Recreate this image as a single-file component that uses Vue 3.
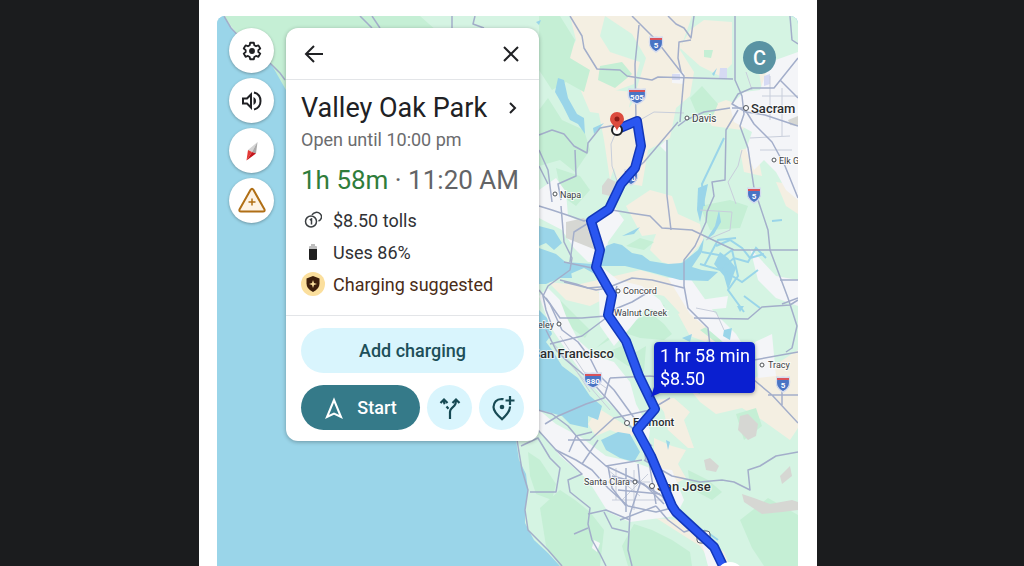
<script setup>
import { ref } from 'vue'

const muted = ref(false)

const greens = [
  'M224 16 H420 L470 60 L400 90 H286 L270 62 L240 38Z',
  'M539 16 H560 L575 40 L570 58 L590 70 L584 92 L566 82 L552 90 L539 70Z',
  'M548 98 L562 120 L584 130 L590 150 L575 172 L560 160 L539 166 V110Z',
  'M600 66 L622 62 L632 74 L615 88 L598 80Z',
  'M704 50 L713 50 L711 58 L704 57Z',
  'M690 98 L702 86 L718 104 L712 118 L696 112Z',
  'M556 168 L580 176 L590 190 L576 206 L562 196Z',
  'M626 246 L640 238 L654 242 L644 250Z',
  'M548 296 L560 300 L572 312 L590 330 L585 338 L566 324Z',
  'M596 348 L612 334 L640 318 L652 314 L664 324 L672 334 L664 340 L640 338 L622 332Z',
  'M607 352 L622 346 L636 352 L646 346 L644 372 L628 366Z',
  'M640 296 L655 298 L665 306 L654 312Z',
  'M700 330 L716 322 L730 336 L718 344Z',
  'M690 352 L700 348 L700 394 L690 390Z',
  'M528 452 L540 460 L556 484 L552 500 L536 494 L530 476Z',
  'M540 508 L560 490 L575 500 L590 512 L604 530 L600 566 H560 L546 546Z',
  'M634 524 L652 530 L672 540 L690 552 L692 566 H628 L622 546Z',
  'M688 470 L708 480 L722 492 L712 500 L690 488Z',
  'M740 520 L768 498 L798 515 V566 H764 L752 548Z',
  'M742 110 L750 104 L756 112 L748 120Z',
  'M700 206 L730 200 L748 206 L740 228 L710 230Z',
  'M736 414 L756 408 L762 426 L744 440Z'
]

const beiges = [
  'M570 16 L605 16 L600 36 L610 52 L640 62 L634 84 L612 92 L604 114 L590 112 L578 84 L566 60 L576 40Z',
  'M605 16 H692 L680 50 L694 72 L690 96 L676 108 L670 138 L648 150 L642 186 L618 182 L608 146 L612 128 L632 104 L646 58 L632 34Z',
  'M594 88 L632 92 L622 144 L610 180 L604 140Z',
  'M690 30 L704 20 L732 22 L732 64 L720 76 L700 66 L680 48Z',
  'M758 66 L780 68 L786 84 L762 90Z',
  'M700 110 L726 100 L760 112 L742 130 L712 126Z',
  'M626 206 L650 190 L672 196 L678 214 L700 224 L704 240 L690 256 L676 266 L662 262 L650 250 L656 234 L642 236Z',
  'M572 286 L640 270 L668 278 L690 296 L706 320 L720 342 L714 346 L690 324 L664 296 L620 286 L584 296Z',
  'M548 282 L588 286 L606 298 L590 306 L566 300Z',
  'M678 314 L690 308 L712 330 L706 342 L690 336Z',
  'M755 378 L798 350 V428 L790 440 L762 420 L742 408 L716 414 L700 402 L692 392Z',
  'M655 400 L674 398 L690 412 L684 420 L694 448 L688 448 L668 430 L664 412Z',
  'M598 408 L614 418 L636 432 L630 438 L610 430 L596 436 L588 424Z',
  'M654 438 L672 446 L686 450 L678 464 L686 478 L668 488 L654 472Z',
  'M656 518 L678 520 L704 536 L724 552 L730 566 H714 L700 546Z',
  'M764 502 L782 506 L778 514 L766 522Z',
  'M740 150 L756 146 L762 176 L744 172Z',
  'M776 182 L790 184 L798 196 V214 L786 206Z',
  'M550 372 L562 384 L576 390 L570 376Z'
]

const urban = [
  'M770 62 L798 52 V200 L786 190 L776 172 L764 160 L754 170 L746 150 L752 132 L734 122 L730 106 L744 92 L760 90Z',
  'M672 74 L684 72 L684 84 L672 83Z',
  'M660 146 L666 140 L666 152Z',
  'M539 190 L556 178 L566 192 L568 216 L582 222 L598 214 L614 206 L624 220 L608 242 L604 262 L588 262 L574 248 L562 230 L539 218Z',
  'M539 296 L548 288 L560 300 L566 316 L578 340 L596 356 L614 362 L630 382 L636 404 L650 430 L648 444 L636 430 L606 400 L584 376 L566 350 L550 326Z',
  'M598 264 L618 280 L642 286 L660 300 L668 314 L646 308 L630 328 L614 346 L600 326Z',
  'M539 410 L556 424 L582 438 L606 456 L634 462 L650 468 L672 470 L684 500 L676 516 L660 518 L630 522 L608 512 L588 480 L560 456 L539 430Z',
  'M668 278 L690 278 L714 312 L736 334 L750 356 L730 348 L690 314Z',
  'M750 248 L776 276 L798 280 V306 L776 298 L758 280Z',
  'M700 300 L728 296 L726 308 L704 310Z',
  'M755 342 L772 334 L776 376 L758 378Z',
  'M594 540 L600 543 L597 552 L592 548Z',
  'M700 536 L712 542 L720 566 H708Z'
]

const grays = [
  'M566 222 L584 218 L592 232 L596 250 L586 246 L566 238Z',
  'M602 186 L608 178 L616 182 L610 196 L602 194Z',
  'M740 416 L748 414 L758 424 L756 436 L748 440 L738 430Z',
  'M704 460 L710 458 L719 466 L716 472 L706 470Z',
  'M780 476 L790 466 L792 476 L782 484Z',
  'M742 494 L754 498 L770 504 L792 500 L798 502 V510 L782 512 L762 514 L744 502Z',
  'M788 120 L798 116 V126 L790 125Z'
]

const water = [
  'M558 78 L564 80 L568 98 L577 114 L584 118 L585 134 L578 124 L570 120 L563 106 L555 92Z',
  'M536 22 L541 20 L539 25Z',
  'M593 128 L604 123 L594 134Z',
  'M712 74 L717 68 L714 76Z',
  'M698 188 L708 184 L704 204 L700 222 L697 210Z',
  'M719 210 L721 222 L714 234 L706 240 L715 226Z',
  'M539 226 L554 230 L562 243 L554 250 L546 243 L539 246Z',
  'M539 248 L556 254 L570 266 L572 278 L560 278 L546 284 L539 284Z',
  'M566 262 L592 264 L604 272 L602 278 L584 268 L570 274Z',
  'M600 266 L606 246 L614 243 L622 245 L632 253 L642 255 L650 261 L668 264 L682 263 L698 250 L704 238 L702 252 L692 267 L702 270 L718 272 L708 281 L680 280 L650 272 L625 266Z',
  'M622 236 L640 227 L634 234Z',
  'M714 264 L720 252 L728 258 L736 268 L728 290 L724 276Z',
  'M539 310 L547 318 L552 334 L546 342 L552 350 L562 366 L578 378 L590 396 L602 406 L598 420 L588 416 L588 428 L570 424 L562 416 L548 412 L539 410Z',
  'M601 440 L618 432 L630 434 L640 452 L634 462 L620 458 L606 450Z',
  'M724 330 L732 328 L730 340 L723 336Z',
  'M737 306 L744 306 L740 312Z',
  'M666 440 L670 442 L668 450Z',
  'M682 338 L692 334 L690 342Z'
]

const channels = 'M704 266 L718 240 L736 238 M702 252 L724 256 L732 250 L738 276 L728 290 L744 312 M716 246 L730 240 L742 248 L750 258 L764 254 M700 264 L720 270 L734 258 L748 262 L756 248 L766 258 M704 206 L702 184 L724 138 M726 272 L742 282 L758 270 M744 296 L760 308 M772 221 L782 220 M704 530 L718 540'

const roads = [
  'M570 16 L582 36 L584 48 L597 69 L620 70 L627 76 L652 80 L658 77 L733 79',
  'M632 16 L656 40 L684 76 L680 122 M678 122 L644 162 L622 182',
  'M639 25 L635 64 L636 120',
  'M668 16 L676 24 L684 28 L691 38 L694 16 M691 40 L679 42 L678 58 L681 72',
  'M735 16 V80 L742 96 L744 114 L740 126 L748 148 L754 188 L768 230 L770 250 L788 298 L797 326 L792 348 L786 352',
  'M790 16 L792 40 L798 44',
  'M798 58 L774 88 L752 88 L738 94 L732 104 L746 112 L765 115 L798 126',
  'M798 98 L780 80 M730 108 L704 112 L686 120 L678 126',
  'M732 108 L744 108 L754 124 L772 142 L785 166 L798 198',
  'M738 110 L726 130 L725 180 L712 182 L714 196 L707 212 L706 222 L695 246 L684 260 L684 286 L688 308 L708 328 L710 346',
  'M667 140 V196 L671 230',
  'M539 135 L552 130 L564 134 L574 146 L587 153 L588 143 L600 128 L616 125',
  'M575 150 L576 176 L558 184 L561 200 M539 150 L548 170 L552 202 M539 166 L548 184',
  'M561 206 L564 242 L572 258 L570 270 L548 286 L543 296 L546 310 L552 326',
  'M539 206 L552 210 L570 216 L584 221 L612 210 L630 213 L650 216 L662 228 L692 230 L734 250 H798',
  'M590 222 L574 232 L570 262 M564 262 L592 268 L608 288 L596 290 L564 282',
  'M560 280 L576 284 L588 288 L600 287 L612 286 L632 278 L652 280 L684 288',
  'M617 286 L608 312 L632 302 L652 290 M546 298 L560 318 L582 318 L606 316 L612 314 M694 318 L748 319 L762 307 L790 305 L798 300',
  'M539 290 L550 304 L562 330 L578 342 L590 358 L598 374 L614 390 L640 426 L646 460',
  'M546 330 L556 350 L566 360 L590 380 L610 402 L630 426 L652 446',
  'M550 344 L582 336 L606 318 M610 378 L650 376 L684 380 L754 360 L798 352',
  'M780 280 H798 M782 304 L798 298',
  'M754 380 L772 395 L798 423 M768 395 H798 M782 378 V405',
  'M538 410 L552 414 L568 426 L588 450 L606 466 L636 480 L662 496 L676 516',
  'M538 430 L556 450 L576 460 L592 470 L608 488 L628 506 L656 512 L672 508',
  'M545 424 L558 416 L586 404 L604 398 L610 378 M568 440 L590 440 L614 418 L650 410 L670 398',
  'M569 452 L576 436 L592 432 M582 464 L598 440',
  'M606 466 L642 460 M608 466 L612 488 L626 506 M612 476 L644 484 L664 504 M626 468 V512 M638 464 L640 484 L630 514 L628 550 L632 566',
  'M646 444 L652 480 L656 504 M644 460 L672 476 L700 482 L722 480 L734 482 L750 490 L748 470 L760 466 L776 456 L798 452',
  'M656 506 L668 520 L684 532 L696 528',
  'M620 520 L656 506 M618 490 L660 494',
  'M517 440 L522 470 L528 490 L525 510 L528 530 L548 550 L562 566',
  'M521 446 L538 438 L550 458 L560 468 L556 492 L530 492',
  'M556 450 L582 474 L568 480 L570 492 L590 508 L588 524 L592 540 L600 554 L606 566',
  'M588 514 L606 510 L630 520 M588 528 L574 534 M604 512 L612 528 L628 532',
  'M360 16 L372 28 M372 16 L380 28 M452 16 V30 M475 16 L473 24 L484 28'
]

const minorRoads = [
  'M616 132 L611 144 L612 166 L618 184',
  'M640 120 L654 112 L684 113',
  'M742 150 L738 166 L728 182 L736 204',
  'M746 72 L752 90 M762 96 H798 M756 108 H780 M770 76 V120 M782 88 V136 M750 138 L790 136 M760 150 H792',
  'M700 210 L732 212 L730 230 L706 240',
  'M696 308 L716 312 L724 330',
  'M550 340 L572 364 L590 392 M560 336 L584 372 L606 388 M558 350 L610 410',
  'M608 470 L640 496 M616 468 V500 M634 470 V510 M648 474 L622 500 M608 482 H650 M612 500 H664'
]

const route = 'M618 129 L637 121 L641 146 L635 168 L621 184 L609 209 L591 221 L600 250 L596 267 L612 295 L608 315 L626 341 L639 376 L655 409 L637 430 L651 456 L672 506 L676 512 L714 547 L724 568'

// Names at the right edge run out of the map, so only their visible part is kept
const cities = [
  { name: 'Davis', x: 692, y: 122, dx: 687, dy: 118, size: 10 },
  { name: 'Sacram', x: 751, y: 113, dx: 746, dy: 108, size: 13, big: true },
  { name: 'Elk G', x: 779, y: 164, dx: 774, dy: 160, size: 9 },
  { name: 'Napa', x: 560, y: 198, dx: 555, dy: 194, size: 9 },
  { name: 'Concord', x: 623, y: 294, dx: 618, dy: 291, size: 9 },
  { name: 'Walnut Creek', x: 614, y: 316, size: 9 },
  { name: 'Berkeley', x: 554, y: 328, dx: 559, dy: 324, size: 9, end: true },
  { name: 'San Francisco', x: 614, y: 358, size: 13, big: true, end: true },
  { name: 'Tracy', x: 768, y: 368, dx: 762, dy: 365, size: 9 },
  { name: 'Fremont', x: 633, y: 426, dx: 627, dy: 423, size: 11, big: true },
  { name: 'Santa Clara', x: 630, y: 485, dx: 635, dy: 482, size: 9, end: true },
  { name: 'San Jose', x: 657, y: 491, dx: 652, dy: 486, size: 13, big: true }
]

const shields = [
  { label: '5', x: 656, y: 44, w: 6 },
  { label: '505', x: 637, y: 96, w: 8 },
  { label: '80', x: 631, y: 177, w: 6 },
  { label: '5', x: 754, y: 195, w: 6 },
  { label: '880', x: 593, y: 380, w: 8 },
  { label: '5', x: 783, y: 384, w: 6 }
]

const shieldPath = (w) => `M${-w} -7 Q${-w / 2} -6 0 -7 Q${w / 2} -6 ${w} -7 C${w + 2} 1 ${w} 5 0 8 C${-w} 5 ${-w - 2} 1 ${-w} -7Z`
</script>

<template>
  <div class="page">
    <main class="sheet">
      <section class="stage">
        <svg class="map" viewBox="217 16 581 550" preserveAspectRatio="xMinYMin slice" role="img" aria-label="Route map">
          <!-- Terrain -->
          <rect class="sea" x="217" y="16" width="581" height="560" />
          <path class="land" d="M224 16 H798 V576 H572 L560 566 L548 553 L534 540 L525 523 L525 510 L528 490 L526 474 L519 460 L516 440 L500 300 L400 150 L285 80 L280 73 L271 64 L252 50 L231 28Z" />
          <path v-for="(d, i) in beiges" :key="'b' + i" class="beige" :d="d" />
          <path v-for="(d, i) in greens" :key="'g' + i" class="green" :d="d" />
          <path v-for="(d, i) in urban" :key="'u' + i" class="urban" :d="d" />
          <path v-for="(d, i) in grays" :key="'y' + i" class="gray" :d="d" />
          <path v-for="(d, i) in water" :key="'w' + i" class="sea" :d="d" />
          <path class="channel" :d="channels" />
          <path class="lilac" d="M720 68 H727 V78 H719Z M764 76 L770 74 V84 L764 86Z M672 74 H680 V80 H672Z" />

          <!-- Roads -->
          <path v-for="(d, i) in minorRoads" :key="'m' + i" class="road minor" :d="d" />
          <path v-for="(d, i) in roads" :key="'r' + i" class="road" :d="d" />
          <path class="road" d="M224 16 L231 28 L252 50 L271 64 L280 73 L285 80" />

          <g v-for="(s, i) in shields" :key="'s' + i" :transform="`translate(${s.x} ${s.y})`">
            <path class="shield" :d="shieldPath(s.w)" />
            <path class="shield-top" :d="`M${-s.w} -5 H${s.w}`" />
            <text class="shield-text" y="4">{{ s.label }}</text>
          </g>
          <rect class="us-shield" x="697" y="531" width="13" height="12" rx="3" />

          <g v-for="c in cities" :key="c.name">
            <circle v-if="c.dx" class="dot" :cx="c.dx" :cy="c.dy" :r="c.big ? 2.5 : 2" />
            <text :class="['city', { big: c.big, end: c.end }]" :x="c.x" :y="c.y" :font-size="c.size">{{ c.name }}</text>
          </g>

          <!-- Route -->
          <path class="route-edge" :d="route" />
          <path class="route" :d="route" />
          <circle cx="730" cy="576" r="14" fill="#fff" />
          <circle class="stop" cx="617" cy="130" r="5" />
          <path class="pin" d="M617 131 C616 126 610 124 610 119 A7 7 0 0 1 624 119 C624 124 618 126 617 131Z" />
          <circle cx="617" cy="119" r="2.5" fill="#8f1d18" />

          <g class="callout">
            <path d="M659 342 H750 Q755 342 755 347 V388 Q755 393 750 393 H660 L651 397 L654 387 V347 Q654 342 659 342Z" />
            <text x="660" y="362">1 hr 58 min</text>
            <text x="660" y="385">$8.50</text>
          </g>
        </svg>

        <div class="overlay">
          <nav class="rail" aria-label="Map controls">
            <button type="button" aria-label="Settings">
              <svg width="22" height="22" viewBox="0 0 24 24" fill="none" stroke="#202124" stroke-width="2" stroke-linejoin="round">
                <path d="M10 3h4l.5 2.7 1.9 1.1 2.6-.9 2 3.4-2.1 1.8v2l2.1 1.8-2 3.4-2.6-.9-1.9 1.1L14 21h-4l-.5-2.5-1.9-1.1-2.6.9-2-3.4 2.1-1.8v-2L3 9.3l2-3.4 2.6.9 1.9-1.1z" />
                <circle cx="12" cy="12" r="3.2" fill="#202124" stroke="none" />
              </svg>
            </button>
            <button type="button" aria-label="Sound" :aria-pressed="muted" @click="muted = !muted">
              <svg width="24" height="24" viewBox="0 0 24 24" fill="none" stroke="#202124" stroke-width="2">
                <path d="M3 9.5v5h4l4 4v-13l-4 4z" />
                <path d="M13.5 8v8c1.5-.8 2.5-2.2 2.5-4s-1-3.2-2.5-4z" fill="#202124" stroke="none" />
                <path d="M14 3.5c3.7 1 6.5 4.3 6.5 8.5s-2.8 7.500-6.5 8.500" />
              </svg>
            </button>
            <button type="button" aria-label="Compass">
              <svg width="24" height="24" viewBox="0 0 24 24">
                <path d="M17.5 3 8 11 12 13z" fill="#d4d4d4" />
                <path d="M17.5 3 12 13l4 1.5z" fill="#a9a9a9" />
                <path d="M6.5 21.5 8 11l4 2z" fill="#e53935" />
                <path d="M6.5 21.5 12 13l4 1.5z" fill="#c4161c" />
              </svg>
            </button>
            <button type="button" aria-label="Report">
              <svg width="30" height="30" viewBox="0 0 30 30" fill="none" stroke="#b06f16" stroke-width="2" stroke-linejoin="round">
                <path d="M13.6 3.8Q15 1.5 16.4 3.8L27.4 23.2Q28.3 25.5 26 25.5H4Q1.7 25.5 2.6 23.2Z" fill="#fdf3e6" />
                <path d="M15 12.5v7M11.5 16h7" stroke-width="1.5" />
              </svg>
            </button>
          </nav>

          <article class="card">
            <header class="card-head">
              <button type="button" aria-label="Back">
                <svg width="24" height="24" viewBox="0 0 24 24"><path d="M21 12H4M12 4l-8 8 8 8" /></svg>
              </button>
              <button type="button" aria-label="Close">
                <svg width="24" height="24" viewBox="0 0 24 24"><path d="M5 5l14 14M19 5L5 19" /></svg>
              </button>
            </header>

            <div class="card-body">
              <button type="button" class="place">
                <h1>Valley Oak Park</h1>
                <svg width="16" height="16" viewBox="0 0 16 16"><path d="M6 3l5 5-5 5" /></svg>
              </button>
              <p class="hours">Open until 10:00 pm</p>
              <p class="eta"><strong>1h 58m</strong> · 11:20 AM</p>
              <ul class="facts">
                <li>
                  <span class="icon">
                    <svg width="18" height="18" viewBox="0 0 18 18" fill="none" stroke="#3c4043" stroke-width="1.5">
                      <circle cx="7" cy="10.5" r="5.5" />
                      <path d="M8 4A5 4.5 0 1 1 14.5 10M5.8 9 7.5 8v5.5" />
                    </svg>
                  </span>
                  $8.50 tolls
                </li>
                <li>
                  <span class="icon">
                    <svg width="10" height="17" viewBox="0 0 10 17">
                      <path d="M3 0h4v2h1q1 0 1 1v3H1V3q0-1 1-1h1z" fill="#bdbdbd" />
                      <path d="M1 5h8v10q0 1-1 1H2q-1 0-1-1z" fill="#1f1f1f" />
                    </svg>
                  </span>
                  Uses 86%
                </li>
                <li class="suggest">
                  <span class="icon badge">
                    <svg width="14" height="16" viewBox="0 0 14 16">
                      <path d="M7 0l6.5 2.5v5Q13.5 13 7 16 .5 13 .5 7.5v-5z" fill="#3d1f0b" />
                      <path d="M7 4l1 3 3 1-3 1-1 3-1-3-3-1 3-1z" fill="#fbdf9d" />
                    </svg>
                  </span>
                  Charging suggested
                </li>
              </ul>
            </div>

            <footer class="card-foot">
              <button type="button" class="pill">Add charging</button>
              <div class="actions">
                <button type="button" class="pill start">
                  <svg width="20" height="24" viewBox="0 0 20 24"><path d="M10 4 17 21 10 17.5 3 21z" /></svg>
                  Start
                </button>
                <button type="button" class="pill round" aria-label="Alternate routes">
                  <svg width="24" height="24" viewBox="0 0 24 24" fill="none" stroke="#174a54" stroke-width="2.2">
                    <path d="M12 23v-7q0-2 1.5-3.5l3-3Q18 8 18 4" />
                    <path d="M6 4v1.5q0 1.5.8 2.7M8.5 10.5l2 2.2" />
                    <path d="M2.5 7 6 3.5 9.5 7M14.5 7 18 3.5 21.5 7" />
                  </svg>
                </button>
                <button type="button" class="pill round" aria-label="Add stop">
                  <svg width="26" height="26" viewBox="0 0 26 26" fill="none" stroke="#174a54" stroke-width="2.2">
                    <path d="M14.5 4.2Q13.5 4 12.5 4 5 4.5 4.5 12q0 5 8.5 12.2Q21 17 21 12v-.5" />
                    <circle cx="13" cy="12" r="2.3" fill="#174a54" stroke="none" />
                    <path d="M21 1v9M16.5 5.5h9" />
                  </svg>
                </button>
              </div>
            </footer>
          </article>

          <button type="button" class="avatar" aria-label="Account">C</button>
        </div>
      </section>
    </main>
  </div>
</template>

<style>
body {
  margin: 0;
  background: #1b1c1e;
}
</style>

<style scoped>
.page {
  box-sizing: border-box;
  min-height: 100vh;
  display: flex;
  padding: 0 207px 0 199px;
  overflow: hidden;
  font-family: Roboto, "Liberation Sans", sans-serif;
  color: #202124;
}

.sheet {
  flex: 1;
  display: flex;
  min-width: 0;
  padding: 16px 19px 0 18px;
  background: #fff;
}

.stage {
  position: relative;
  flex: 1;
  min-width: 0;
  border-radius: 8px 8px 0 0;
  overflow: hidden;
  background: #9ad5e9;
}

/* Map */
.map {
  position: absolute;
  inset: 0;
  width: 100%;
  height: 100%;
}

.sea {
  fill: #9ad5e9;
}

.land {
  fill: #d5f4e3;
}

.green {
  fill: #c5efd5;
}

.beige {
  fill: #f4efe2;
}

.urban {
  fill: #f4f5f8;
}

.gray {
  fill: #d6d7d3;
}

.lilac {
  fill: #d6daf3;
}

.channel {
  fill: none;
  stroke: #9ad5e9;
  stroke-width: 2;
}

.road {
  fill: none;
  stroke: #a3aeca;
  stroke-width: 1.5;
  stroke-linejoin: round;
}

.road.minor {
  stroke: #c8cedb;
  stroke-width: 1;
}

.shield {
  fill: #4a74c4;
  stroke: #d5dcee;
  stroke-width: 1.5;
}

.shield-top {
  stroke: #d9535a;
  stroke-width: 2;
}

.shield-text {
  fill: #fff;
  font-size: 8px;
  font-weight: 700;
  text-anchor: middle;
}

.us-shield {
  fill: #f4f5f8;
  stroke: #5f6368;
}

.dot {
  fill: #fff;
  stroke: #4d5156;
}

.city {
  fill: #3c4043;
  stroke: #fff;
  stroke-width: 2;
  stroke-opacity: 0.7;
  paint-order: stroke;
}

.city.big {
  fill: #2b2d30;
  font-weight: 500;
}

.city.end {
  text-anchor: end;
}

.route-edge,
.route {
  fill: none;
  stroke: #1237b8;
  stroke-width: 10;
  stroke-linejoin: round;
}

.route {
  stroke: #2a56f0;
  stroke-width: 7;
}

.stop {
  fill: #fff;
  stroke: #202124;
  stroke-width: 2;
}

.pin {
  fill: #dc4b3e;
}

.callout {
  filter: drop-shadow(0 1px 2px rgba(0, 0, 0, 0.35));
  fill: #0a1fd0;
}

.callout text {
  fill: #fff;
  font-size: 18px;
}

/* Controls over the map */
.overlay {
  position: relative;
  display: flex;
  align-items: flex-start;
  gap: 12px;
  padding: 12px 22px 12px 12px;
}

button {
  display: flex;
  align-items: center;
  justify-content: center;
  padding: 0;
  border: 0;
  background: none;
  font: inherit;
  color: inherit;
  cursor: pointer;
}

.rail {
  display: flex;
  flex-direction: column;
  gap: 5px;
}

.rail button {
  width: 45px;
  height: 45px;
  border-radius: 50%;
  background: #fff;
  box-shadow: 0 1px 3px rgba(0, 0, 0, 0.3);
}

.card {
  width: 253px;
  border-radius: 12px;
  background: #fff;
  box-shadow: 0 1px 4px rgba(0, 0, 0, 0.3);
}

.card-head {
  display: flex;
  justify-content: space-between;
  padding: 14px 16px 13px;
  border-bottom: 1px solid #e3e5e8;
}

.card-head svg,
.place svg {
  fill: none;
  stroke: #202124;
  stroke-width: 2;
}

.card-body {
  padding: 12px 15px 15px;
}

.place {
  width: 100%;
  justify-content: space-between;
  padding-right: 4px;
}

.place h1 {
  margin: 0;
  font-size: 27px;
  font-weight: 400;
  line-height: 32px;
}

.hours {
  margin: 4px 0 0;
  font-size: 18px;
  line-height: 24px;
  color: #6b6c6e;
}

.eta {
  margin: 8px 0 4px;
  font-size: 26px;
  line-height: 40px;
  white-space: nowrap;
  color: #636466;
}

.eta strong {
  font-weight: 400;
  color: #2f7d3b;
}

.facts {
  margin: 0;
  padding: 0;
  list-style: none;
}

.facts li {
  display: flex;
  align-items: center;
  gap: 8px;
  height: 32px;
  font-size: 18px;
  color: #303134;
}

.facts .suggest {
  color: #4a2c17;
}

.icon {
  display: flex;
  align-items: center;
  justify-content: center;
  width: 24px;
  height: 24px;
  border-radius: 50%;
}

.badge {
  background: #fbdf9d;
}

.card-foot {
  display: flex;
  flex-direction: column;
  gap: 12px;
  padding: 12px 15px 11px;
  border-top: 1px solid #e3e5e8;
}

.actions {
  display: flex;
  gap: 7px;
}

.pill {
  height: 45px;
  border-radius: 23px;
  background: #d9f5fd;
  font-size: 18px;
  font-weight: 500;
  color: #1d4f59;
}

.start {
  flex: 1;
  gap: 13px;
  background: #357a89;
  color: #fff;
}

.start svg {
  fill: none;
  stroke: #fff;
  stroke-width: 2;
}

.round {
  width: 45px;
}

.avatar {
  width: 33px;
  height: 33px;
  margin: 13px 0 0 auto;
  border-radius: 50%;
  background: #5a93a3;
  font-size: 20px;
  font-weight: 500;
  color: #fff;
}
</style>
